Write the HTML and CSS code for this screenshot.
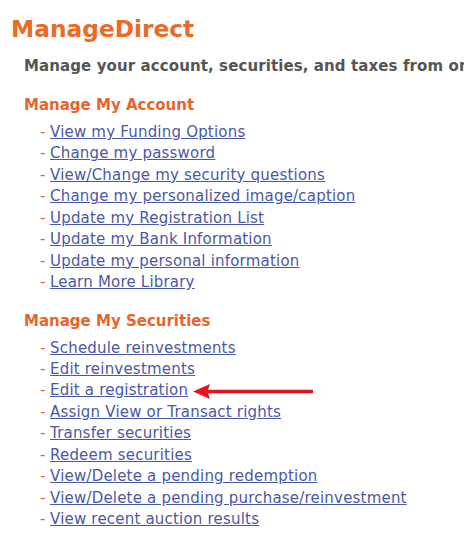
FILE: index.html
```html
<!DOCTYPE html>
<html>
<head>
<meta charset="utf-8">
<link rel="stylesheet" href="styles.css">
</head>
<body>
<div class="page">
  <h1 class="title">ManageDirect</h1>
  <p class="intro">Manage your account, securities, and taxes from one place.</p>

  <h2 class="section-head first">Manage My Account</h2>
  <ul class="links">
    <li><span class="dash">-</span><a href="#">View my Funding Options</a></li>
    <li><span class="dash">-</span><a href="#">Change my password</a></li>
    <li><span class="dash">-</span><a href="#">View/Change my security questions</a></li>
    <li><span class="dash">-</span><a href="#">Change my personalized image/caption</a></li>
    <li><span class="dash">-</span><a href="#">Update my Registration List</a></li>
    <li><span class="dash">-</span><a href="#">Update my Bank Information</a></li>
    <li><span class="dash">-</span><a href="#">Update my personal information</a></li>
    <li><span class="dash">-</span><a href="#">Learn More Library</a></li>
  </ul>

  <h2 class="section-head">Manage My Securities</h2>
  <ul class="links">
    <li><span class="dash">-</span><a href="#">Schedule reinvestments</a></li>
    <li><span class="dash">-</span><a href="#">Edit reinvestments</a></li>
    <li><span class="dash">-</span><a href="#">Edit a registration</a><svg class="arrow" width="124" height="21" viewBox="0 0 124 21"><polygon points="2,10.5 19,3 17,8.8 122,8.8 122,12.2 17,12.2 19,18" fill="#e3141c"/></svg></li>
    <li><span class="dash">-</span><a href="#">Assign View or Transact rights</a></li>
    <li><span class="dash">-</span><a href="#">Transfer securities</a></li>
    <li><span class="dash">-</span><a href="#">Redeem securities</a></li>
    <li><span class="dash">-</span><a href="#">View/Delete a pending redemption</a></li>
    <li><span class="dash">-</span><a href="#">View/Delete a pending purchase/reinvestment</a></li>
    <li><span class="dash">-</span><a href="#">View recent auction results</a></li>
  </ul>
</div>
</body>
</html>
```

FILE: styles.css
```css
html, body {
  margin: 0;
  padding: 0;
  background: #ffffff;
}

body {
  font-family: "DejaVu Sans", Verdana, sans-serif;
  overflow: hidden;
}

.page {
  padding: 15px 0 0 11px;
  width: 464px;
  box-sizing: border-box;
  overflow: hidden;
}

.title {
  margin: 0;
  font-size: 23.3px;
  line-height: 28px;
  font-weight: bold;
  color: #ec6a24;
}

.intro {
  margin: 13px 0 0 13px;
  font-size: 15px;
  line-height: 20px;
  font-weight: bold;
  letter-spacing: 0.1px;
  color: #555555;
  white-space: nowrap;
  overflow: hidden;
}

.section-head {
  margin: 17px 0 0 13px;
  font-size: 15px;
  line-height: 20px;
  font-weight: bold;
  color: #e8642c;
}

.section-head.first {
  margin-top: 19px;
}

.links {
  list-style: none;
  margin: 7px 0 0 29px;
  padding: 0;
}

.links li {
  display: flex;
  align-items: center;
  height: 21.45px;
  font-size: 15px;
  line-height: 21.45px;
  letter-spacing: 0.2px;
  white-space: nowrap;
}

.dash {
  color: #e8642c;
  width: 10px;
  flex: none;
}

.links a {
  color: #4a58a8;
  text-decoration: underline;
}

.arrow {
  margin-left: 3px;
  flex: none;
}
```
